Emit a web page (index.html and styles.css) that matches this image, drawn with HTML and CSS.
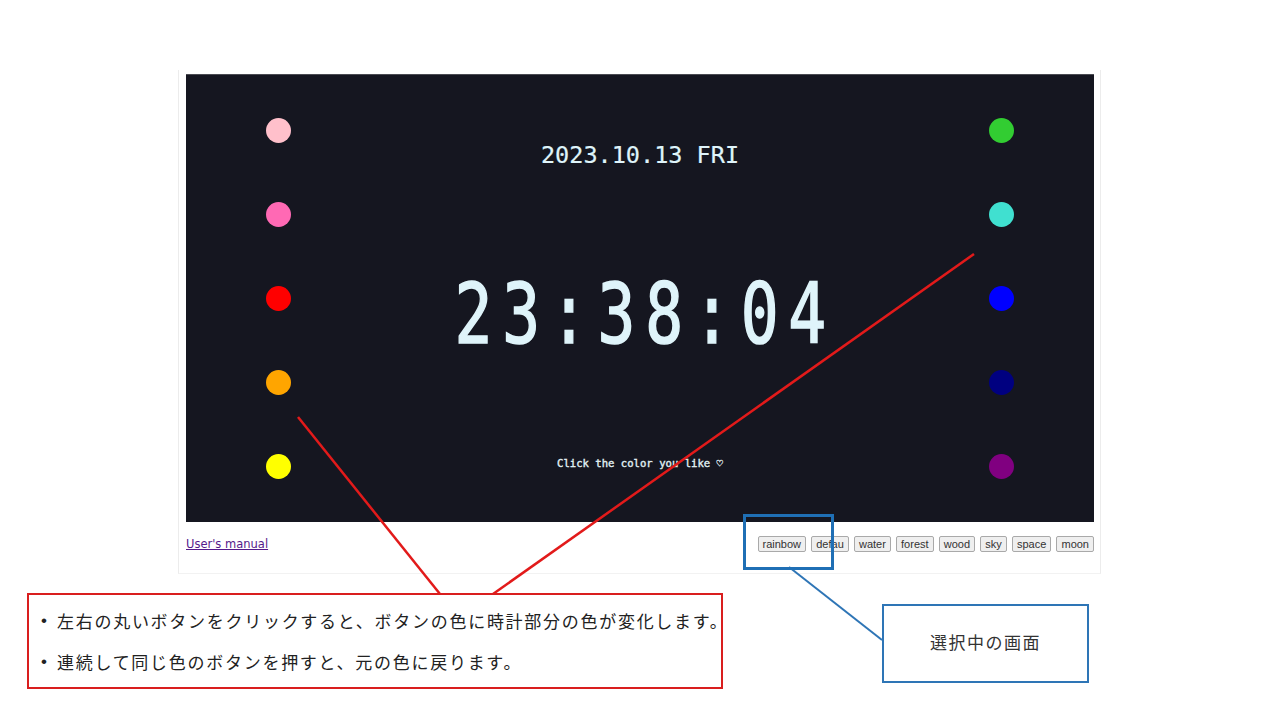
FILE: index.html
```html
<!DOCTYPE html>
<html lang="ja">
<head>
<meta charset="utf-8">
<title>Clock</title>
<link rel="stylesheet" href="styles.css">
</head>
<body>
<div class="slide">
  <div class="frame">
    <div class="panel">
      <div class="dots">
        <span class="dot pink"></span>
        <span class="dot hotpink"></span>
        <span class="dot red"></span>
        <span class="dot orange"></span>
        <span class="dot yellow"></span>
      </div>
      <div class="center">
        <div class="date">2023.10.13 FRI</div>
        <div class="clock">23:38:04</div>
        <div class="hint">Click the color you like ♡</div>
      </div>
      <div class="dots">
        <span class="dot lime"></span>
        <span class="dot turq"></span>
        <span class="dot blue"></span>
        <span class="dot navy"></span>
        <span class="dot purple"></span>
      </div>
    </div>
    <div class="footer">
      <a class="manual" href="#">User's manual</a>
      <div class="themes">
        <button class="theme">rainbow</button>
        <button class="theme">defau</button>
        <button class="theme">water</button>
        <button class="theme">forest</button>
        <button class="theme">wood</button>
        <button class="theme">sky</button>
        <button class="theme">space</button>
        <button class="theme">moon</button>
      </div>
    </div>
  </div>

  <svg class="lines" width="1280" height="720" viewBox="0 0 1280 720">
    <line x1="298" y1="417" x2="440" y2="594" stroke="#e21a1a" stroke-width="2.5"/>
    <line x1="974" y1="254" x2="493" y2="594" stroke="#e21a1a" stroke-width="2.5"/>
    <line x1="789" y1="567" x2="882" y2="640" stroke="#2e75b6" stroke-width="2"/>
  </svg>

  <div class="select-box"></div>

  <div class="note red-note">
    <ul class="bullets">
      <li>左右の丸いボタンをクリックすると、ボタンの色に時計部分の色が変化します。</li>
      <li>連続して同じ色のボタンを押すと、元の色に戻ります。</li>
    </ul>
  </div>

  <div class="note blue-note">選択中の画面</div>
</div>
</body>
</html>
```

FILE: styles.css
```css
* { box-sizing: border-box; }
html, body { margin: 0; padding: 0; background: #ffffff; }
body { width: 1280px; height: 720px; overflow: hidden; }

.slide {
  position: relative;
  width: 1280px;
  height: 720px;
  padding-top: 70px;
  padding-left: 178px;
}

.frame {
  width: 923px;
  height: 504px;
  padding: 4px 6px 0 7px;
  border-left: 1px solid #ececec;
  border-right: 1px solid #ececec;
  border-bottom: 1px solid #f2f2f2;
}

.panel {
  width: 908px;
  height: 448px;
  background: #151620;
  border-top: 1px solid #4a4b52;
  display: flex;
  justify-content: space-between;
  padding: 0 80px 0 80px;
}

.dots {
  display: flex;
  flex-direction: column;
  gap: 59px;
  padding-top: 43px;
}
.dot { display: block; width: 25px; height: 25px; border-radius: 50%; }
.pink { background: #ffc0cb; }
.hotpink { background: #ff69b4; }
.red { background: #ff0000; }
.orange { background: #ffa500; }
.yellow { background: #ffff00; }
.lime { background: #32cd32; }
.turq { background: #40e0d0; }
.blue { background: #0000ff; }
.navy { background: #000080; }
.purple { background: #800080; }

.center {
  flex: 1;
  display: flex;
  flex-direction: column;
  align-items: center;
  color: #dff4fa;
  font-family: "DejaVu Sans Mono", "Liberation Mono", monospace;
}

.date {
  margin-top: 68px;
  font-size: 23.5px;
  line-height: 24px;
  height: 24px;
  -webkit-text-stroke: 0.2px #dff4fa;
}

.clock {
  margin-top: 105px;
  font-size: 84px;
  line-height: 84px;
  height: 84px;
  letter-spacing: 13px;
  margin-right: -10px;
  transform: scaleX(0.75);
  white-space: nowrap;
  -webkit-text-stroke: 1.6px #dff4fa;
}

.hint {
  margin-top: 101px;
  font-size: 10.6px;
  line-height: 12px;
  color: #e2f2f5;
  -webkit-text-stroke: 0.35px #e2f2f5;
}

.footer {
  height: 52px;
  display: flex;
  justify-content: space-between;
  align-items: flex-start;
  padding-top: 14px;
}

.manual {
  font-family: "DejaVu Sans", Verdana, sans-serif;
  font-size: 11.5px;
  line-height: 16px;
  color: #551a8b;
  text-decoration: underline;
}

.themes { display: flex; gap: 5.2px; }
.theme {
  font-family: "Liberation Sans", Arial, sans-serif;
  font-size: 11px;
  line-height: 14px;
  height: 16px;
  padding: 0 4px;
  margin: 0;
  color: #333333;
  background: #efefef;
  border: 1px solid #a9a9a9;
  border-radius: 2px;
}

.lines {
  position: absolute;
  left: 0;
  top: 0;
  pointer-events: none;
}

.select-box {
  position: absolute;
  left: 743px;
  top: 514px;
  width: 91px;
  height: 56px;
  border: 3px solid #1f6fb5;
}

.note {
  position: absolute;
  background: #ffffff;
  font-family: "Noto Sans CJK JP", sans-serif;
  color: #222222;
}

.red-note {
  left: 27px;
  top: 593px;
  width: 696px;
  height: 96px;
  border: 2px solid #d91e1e;
  padding-top: 12px;
  padding-left: 12px;
}

.bullets {
  list-style: none;
  margin: 0;
  padding: 0;
}
.bullets li {
  position: relative;
  padding-left: 16px;
  font-size: 17px;
  line-height: 28px;
  letter-spacing: 1.72px;
  margin-bottom: 13px;
  white-space: nowrap;
}
.bullets li::before {
  content: "•";
  position: absolute;
  left: 0;
  top: 0;
  font-family: "Liberation Sans", sans-serif;
}

.blue-note {
  left: 882px;
  top: 604px;
  width: 207px;
  height: 79px;
  border: 2px solid #2e75b6;
  display: flex;
  align-items: center;
  justify-content: center;
  padding-bottom: 5px;
  font-size: 17px;
  letter-spacing: 1.5px;
  color: #333333;
}
```
